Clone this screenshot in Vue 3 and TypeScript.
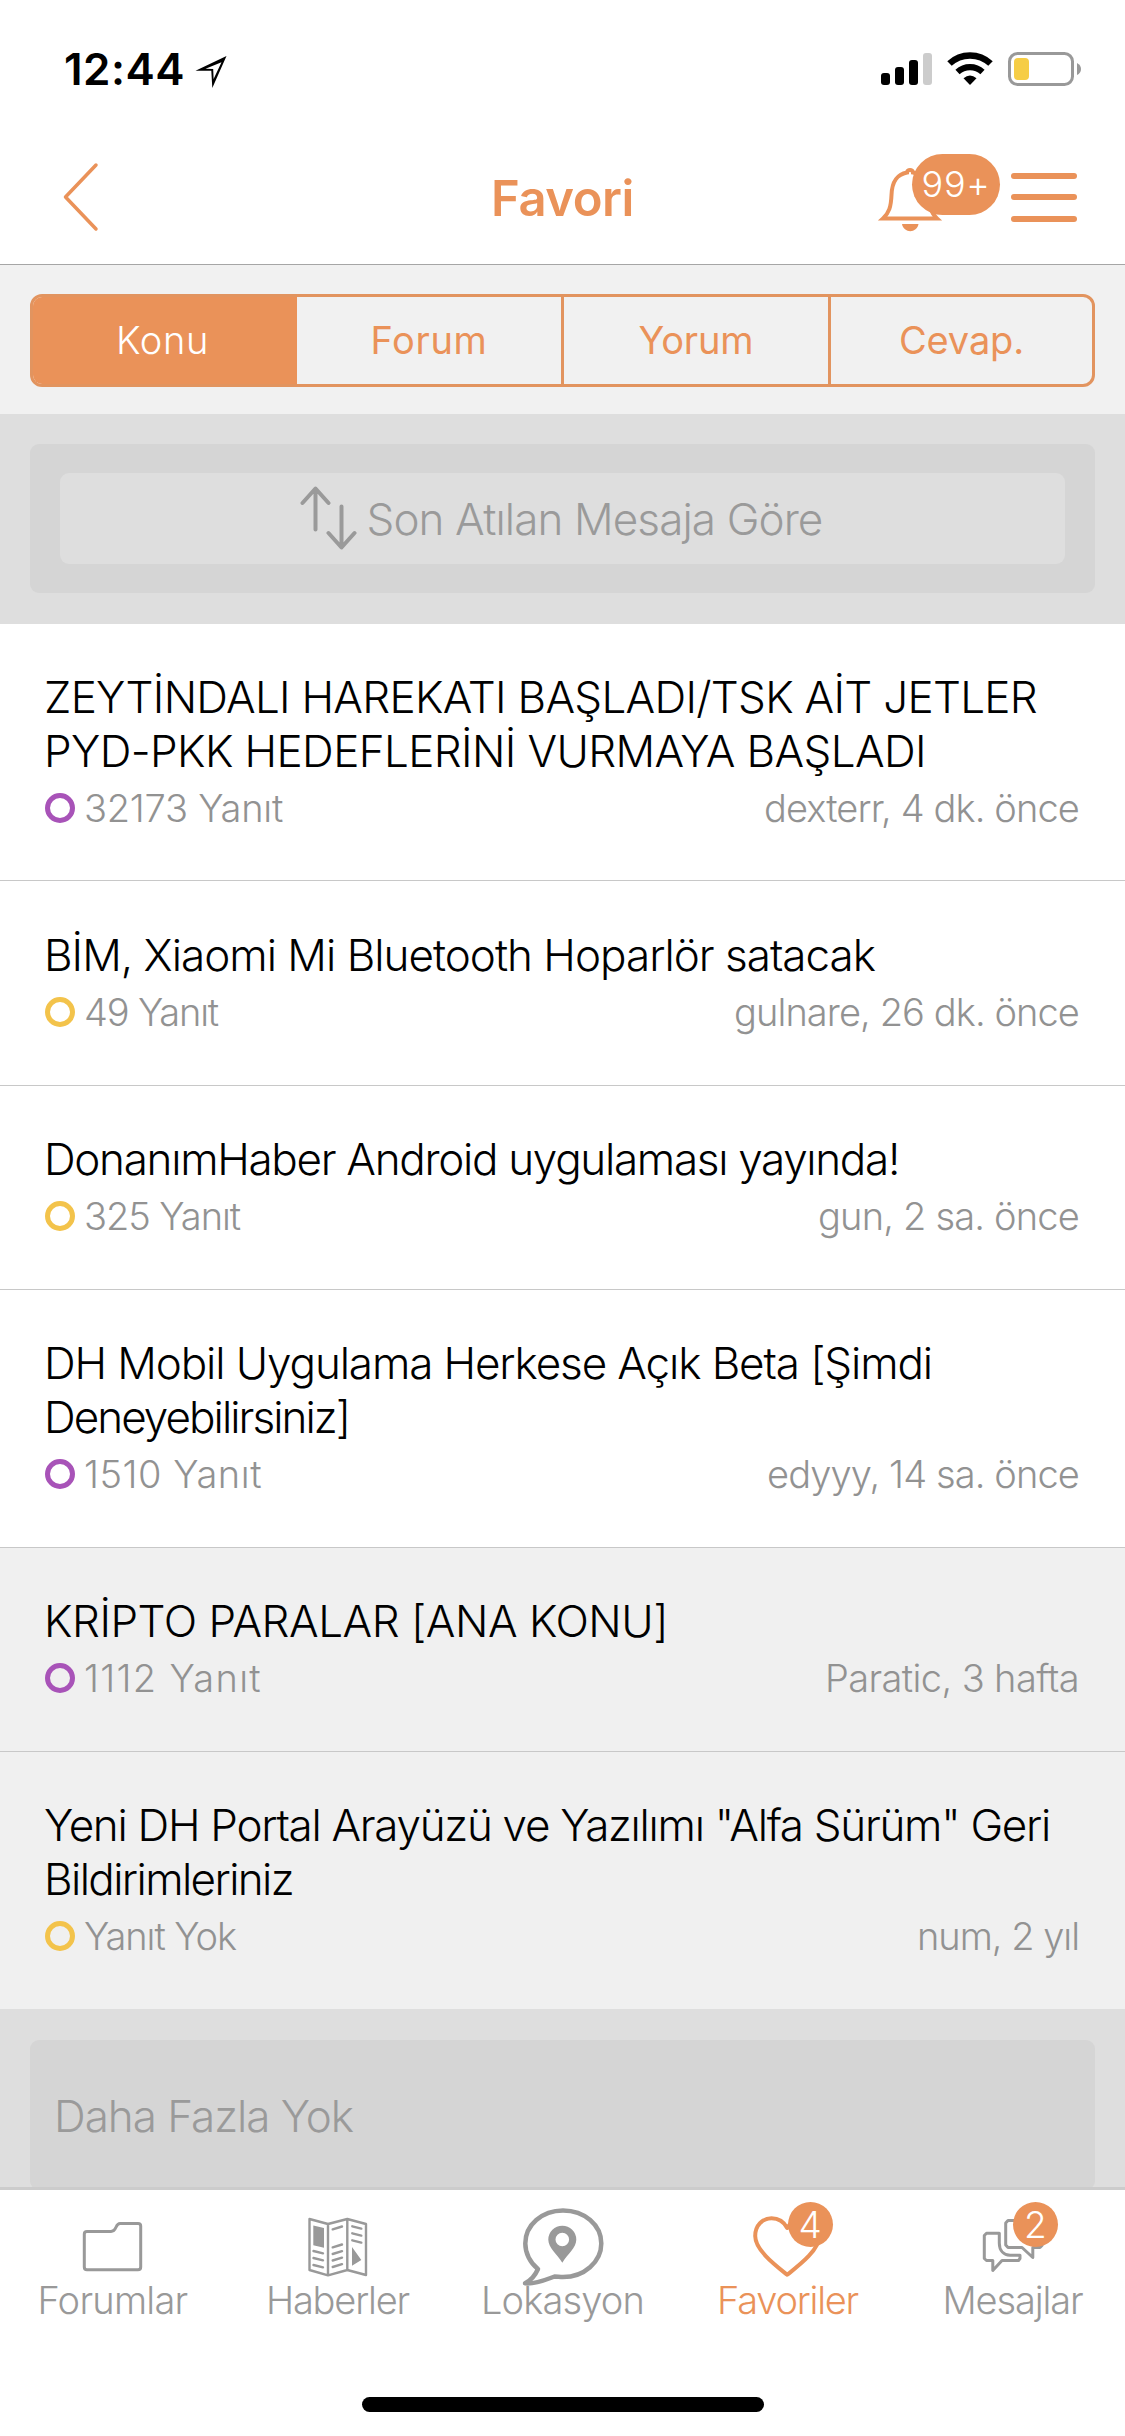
<script setup lang="ts">
import type { Directive } from 'vue'

interface Line {
  text: string
  width: number
}

interface Topic {
  lines: Line[]
  replies: Line
  last: Line
  hot: boolean
  read: boolean
}

interface Tab {
  id: string
  label: Line
  badge?: string
  active?: boolean
}

// Tracks a single line of text so that it spans the given advance width.
const vFit: Directive<HTMLElement, number> = {
  mounted(el, binding) {
    const count = (el.textContent ?? '').length
    const natural = el.getBoundingClientRect().width
    const spacing = (binding.value - natural) / count
    el.style.letterSpacing = `${spacing.toFixed(3)}px`
  },
}

const segments: Line[] = [
  { text: 'Konu', width: 93 },
  { text: 'Forum', width: 117 },
  { text: 'Yorum', width: 115 },
  { text: 'Cevap.', width: 125 },
]

const topics: Topic[] = [
  {
    lines: [
      { text: 'ZEYTİNDALI HAREKATI BAŞLADI/TSK AİT JETLER', width: 993 },
      { text: 'PYD-PKK HEDEFLERİNİ VURMAYA BAŞLADI', width: 882 },
    ],
    replies: { text: '32173 Yanıt', width: 199 },
    last: { text: 'dexterr, 4 dk. önce', width: 315 },
    hot: true,
    read: false,
  },
  {
    lines: [{ text: 'BİM, Xiaomi Mi Bluetooth Hoparlör satacak', width: 831 }],
    replies: { text: '49 Yanıt', width: 134 },
    last: { text: 'gulnare, 26 dk. önce', width: 345 },
    hot: false,
    read: false,
  },
  {
    lines: [{ text: 'DonanımHaber Android uygulaması yayında!', width: 855 }],
    replies: { text: '325 Yanıt', width: 156 },
    last: { text: 'gun, 2 sa. önce', width: 261 },
    hot: false,
    read: false,
  },
  {
    lines: [
      { text: 'DH Mobil Uygulama Herkese Açık Beta [Şimdi', width: 888 },
      { text: 'Deneyebilirsiniz]', width: 305 },
    ],
    replies: { text: '1510 Yanıt', width: 178 },
    last: { text: 'edyyy, 14 sa. önce', width: 312 },
    hot: true,
    read: false,
  },
  {
    lines: [{ text: 'KRİPTO PARALAR [ANA KONU]', width: 624 }],
    replies: { text: '1112 Yanıt', width: 178 },
    last: { text: 'Paratic, 3 hafta', width: 254 },
    hot: true,
    read: true,
  },
  {
    lines: [
      { text: 'Yeni DH Portal Arayüzü ve Yazılımı "Alfa Sürüm" Geri', width: 1006 },
      { text: 'Bildirimleriniz', width: 249 },
    ],
    replies: { text: 'Yanıt Yok', width: 152 },
    last: { text: 'num, 2 yıl', width: 162 },
    hot: false,
    read: true,
  },
]

const tabs: Tab[] = [
  { id: 'forums', label: { text: 'Forumlar', width: 150 } },
  { id: 'news', label: { text: 'Haberler', width: 143 } },
  { id: 'location', label: { text: 'Lokasyon', width: 163 } },
  { id: 'favorites', label: { text: 'Favoriler', width: 141 }, badge: '4', active: true },
  { id: 'messages', label: { text: 'Mesajlar', width: 140 }, badge: '2' },
]
</script>

<template>
  <div class="screen">
    <div class="status">
      <span v-fit="121" class="clock">12:44</span>
      <svg class="arrow" width="34" height="36" viewBox="0 0 34 36">
        <path d="M31.5 1 L0.5 15.8 H16.3 L17.3 33 Z M26.5 7.2 L18.6 24 L18.2 14 L10.5 13.8 Z" fill="#000" fill-rule="evenodd" />
      </svg>
      <svg class="signals" width="206" height="40" viewBox="0 0 206 40">
        <rect x="1" y="23" width="9" height="12" rx="3" />
        <rect x="15" y="17" width="9" height="18" rx="3" />
        <rect x="29" y="10" width="9" height="25" rx="3" />
        <rect x="43" y="3" width="9" height="32" rx="3" fill="#ccc" />
        <path d="M69.5 13.5 A30 30 0 0 1 110.500 13.500" fill="none" stroke="#000" stroke-width="6.500" />
        <path d="M77.500 22 A18.500 18.500 0 0 1 102.500 22" fill="none" stroke="#000" stroke-width="6.200" />
        <path d="M83.500 28.300 Q90 22.500 96.500 28.300 L90 35 Z" />
        <rect x="129.500" y="3.500" width="63" height="31" rx="8" fill="none" stroke="#999" stroke-width="3" />
        <rect x="134" y="8" width="15" height="22" rx="4" fill="#f6cd45" />
        <path d="M197 13 Q201 15 201 19 T197 25 Z" fill="#999" />
      </svg>
    </div>

    <header class="nav">
      <svg class="back" width="40" height="72" viewBox="0 0 40 72">
        <path d="M36 4 L5.500 36 L36 68" />
      </svg>
      <h1 v-fit="143" class="title">Favori</h1>
      <div class="actions">
        <div class="bell">
          <svg width="68" height="72" viewBox="0 0 68 72">
            <path d="M7 57.500 C13 52 15 46 15.500 34 C16 20 21 13.500 31 11.500 C31 8 37 8 37 11.500 C47 13.500 52 20 52.500 34 C53 46 55 52 61 57.500 Z" class="stroke" />
            <path d="M26 63 H42.500 C41 72.500 27.500 72.500 26 63 Z" class="fill" />
          </svg>
          <span class="count"><span v-fit="69">99+</span></span>
        </div>
        <div class="menu"><i /><i /><i /></div>
      </div>
    </header>

    <div class="segbar">
      <div class="segments">
        <div v-for="(s, i) in segments" :key="s.text" class="segment" :class="{ on: i === 0 }">
          <span v-fit="s.width">{{ s.text }}</span>
        </div>
      </div>
    </div>

    <div class="sortbar">
      <div class="sortbox">
        <div class="sort">
          <svg width="58" height="66" viewBox="0 0 58 66">
            <path d="M3.500 18 L16.500 3.500 L29.500 18 M16.500 4 V44.500 M42.500 21.500 V62 M29.500 48 L42.500 62.500 L55.500 48" />
          </svg>
          <span v-fit="456">Son Atılan Mesaja Göre</span>
        </div>
      </div>
    </div>

    <main>
      <article v-for="t in topics" :key="t.lines[0].text" class="topic" :class="{ read: t.read }">
        <div v-for="l in t.lines" :key="l.text" class="line"><span v-fit="l.width">{{ l.text }}</span></div>
        <div class="meta">
          <i class="dot" :class="{ hot: t.hot }" />
          <span v-fit="t.replies.width">{{ t.replies.text }}</span>
          <span v-fit="t.last.width" class="last">{{ t.last.text }}</span>
        </div>
      </article>
    </main>

    <div class="more">
      <div class="morebox"><span v-fit="299">Daha Fazla Yok</span></div>
    </div>

    <nav class="tabs">
      <div v-for="tab in tabs" :key="tab.id" class="tab" :class="{ active: tab.active }">
        <svg width="225" height="87" viewBox="0 0 225 87">
          <path
            v-if="tab.id === 'forums'"
            d="M84.300 77 V44 Q84.300 41.500 87 41.500 H111 C117 41.500 115 33.500 120 33.500 H138 Q140.700 33.500 140.700 36 V77 Q140.700 79.800 138 79.800 H87 Q84.300 79.800 84.300 77 Z"
            stroke-width="3"
          />
          <g v-else-if="tab.id === 'news'" stroke-width="2.400">
            <path d="M84.500 29 L103 34 L122.300 29 L141 34 V85 L122.300 80 L103 85.300 L84.500 80 Z M103 34 V85 M122.300 29 V80" />
            <path d="M88.300 35.500 L99 38 V57.800 L88.300 55.300 Z M127 57 L136.300 70 L127 75.700 Z" class="solid" />
            <path
              d="M88.500 61 L98 63.300 M88.500 68 L98 70.300 M88.500 75 L98 77.300 M107.700 39.300 L117 36.500 M107.700 57.300 L117 54.500 M107.700 64 L117 61.200 M107.700 70.500 L117 67.700 M107.700 77 L117 74.200 M127.300 36.300 L136.300 38.600 M127.300 43.300 L136.300 45.600 M127.300 50.300 L136.300 52.600"
            />
          </g>
          <g v-else-if="tab.id === 'location'">
            <path
              d="M88 79 C80 73 75.300 63 75.300 53.500 C75.300 35 92 20.500 113 20.500 C134.500 20.500 151.300 35 151.300 53.500 C151.300 72 134 87 113 87 C110 87 107 86.500 104.500 86.500 C96 89.500 86 94.500 75 93.300 C82 90 86 83.500 88 79 Z"
              stroke-width="4.500"
            />
            <path
              d="M112.300 72.700 C107 64 98.300 57.500 98.300 49.700 A14 14 0 0 1 126.300 49.700 C126.300 57.500 117.600 64 112.300 72.700 Z M105.500 49.500 A6.800 6.800 0 1 0 119.100 49.500 A6.800 6.800 0 1 0 105.500 49.500 Z"
              class="solid"
              fill-rule="evenodd"
            />
          </g>
          <path
            v-else-if="tab.id === 'favorites'"
            d="M112.200 84.800 C100 75 80.200 60 80.200 46 C80.200 35.500 87.500 28.300 96.500 28.300 C104 28.300 109 32 112.200 38 C115.500 32 120.500 28.300 128 28.300 C137 28.300 144.300 35.500 144.300 46 C144.300 60 124.500 75 112.200 84.800 Z"
            stroke-width="4"
          />
          <g v-else stroke-width="3">
            <path d="M86.500 43.300 H99.300 V53 C99.300 61 104 65 110 65.300 H120 V68.500 L118.500 70.500 H102 L92.800 80.500 V70.500 H86.500 L84.300 68.500 V45.500 Z" />
            <path d="M108 30.500 H142 V55.500 L140 57.500 H132.800 V67.500 L122 57.500 H108 L105.700 55 V33 Z" />
          </g>
        </svg>
        <span v-if="tab.badge" class="badge">{{ tab.badge }}</span>
        <span v-fit="tab.label.width" class="label">{{ tab.label.text }}</span>
      </div>
    </nav>
    <div class="home"><i /></div>
  </div>
</template>

<style>
body {
  margin: 0;
  background: #fff;
}
</style>

<style scoped>
.screen {
  width: 1125px;
  height: 2436px;
  overflow: hidden;
  display: flex;
  flex-direction: column;
  background: #fff;
  font-family: Inter, "Liberation Sans", sans-serif;
  font-weight: 300;
  white-space: nowrap;
}
.screen > * {
  flex-shrink: 0;
}
svg {
  display: block;
  overflow: visible;
}
.status {
  height: 132px;
  box-sizing: border-box;
  padding: 42px 39px 0 64px;
  display: flex;
  align-items: flex-start;
}
.clock {
  font-size: 44px;
  line-height: 54px;
  font-weight: 600;
}
.arrow {
  margin: 13px 0 0 10px;
}
.signals {
  margin: 8px 0 0 auto;
}
.nav {
  height: 132px;
  display: grid;
  grid-template-columns: 1fr auto 1fr;
  align-items: center;
  border-bottom: 1px solid #a6a6a6;
  color: #ea9259;
}
.back {
  margin: -2px 0 0 60px;
  fill: none;
  stroke: #ea9259;
  stroke-width: 3.5;
  stroke-linecap: round;
  stroke-linejoin: round;
}
.title {
  margin: 2px 0 0;
  font-size: 49px;
  line-height: 60px;
  font-weight: 600;
}
.actions {
  display: flex;
  justify-content: flex-end;
  align-items: center;
  padding-right: 48px;
}
.bell {
  position: relative;
  width: 135px;
  height: 72px;
  margin-top: -2px;
}
.stroke {
  fill: none;
  stroke: #ea9259;
  stroke-width: 4;
}
.fill {
  fill: #ea9259;
}
.count {
  position: absolute;
  left: 36px;
  top: -7px;
  width: 88px;
  height: 61px;
  border-radius: 31px;
  background: #ea9259;
  color: #fff;
  font-size: 36px;
  line-height: 61px;
  text-align: center;
}
.menu {
  display: flex;
  flex-direction: column;
  gap: 15.500px;
  margin-top: -2px;
}
.menu i {
  width: 66px;
  height: 6px;
  border-radius: 3px;
  background: #ea9259;
}
.segbar {
  height: 149px;
  box-sizing: border-box;
  padding: 29px 30px 0;
  background: #f1f1f1;
}
.segments {
  display: flex;
  height: 93px;
  box-sizing: border-box;
  border: 3px solid #e2945f;
  border-radius: 12px;
  overflow: hidden;
}
.segment {
  flex: 1;
  box-sizing: border-box;
  border-right: 3px solid #e2945f;
  color: #ea9259;
  font-size: 38px;
  line-height: 87px;
  font-weight: 400;
  text-align: center;
}
.segment:last-child {
  flex: 0 0 261px;
  border-right: 0;
}
.segment.on {
  flex: 0 0 264px;
  border-right: 0;
  padding-right: 5px;
  background: #ea9259;
  color: #fff;
  font-weight: 300;
}
.sortbar {
  height: 209.500px;
  box-sizing: border-box;
  padding: 30px;
  background: #dedede;
}
.sortbox {
  height: 149px;
  box-sizing: border-box;
  padding: 29px 30px;
  border-radius: 9px;
  background: #d5d5d5;
}
.sort {
  height: 91px;
  box-sizing: border-box;
  padding: 0 4px 0 0;
  display: flex;
  align-items: center;
  justify-content: center;
  gap: 10px;
  border-radius: 9px;
  background: #dedede;
  color: #9a9a9a;
  font-size: 44px;
}
.sort path {
  fill: none;
  stroke: #9a9a9a;
  stroke-width: 4;
  stroke-linecap: round;
  stroke-linejoin: round;
}
.sort svg {
  margin-top: -2px;
}
.sort span {
  padding-top: 1px;
}
.topic {
  padding: 47.500px 46px 48.750px 44px;
  border-bottom: 1px solid #c8c8c8;
  background: #fff;
  color: #000;
}
.topic.read {
  background: #f0f0f0;
}
.topic:last-child {
  border-bottom-color: #dedede;
}
.line {
  font-size: 44px;
  line-height: 53.500px;
}
.meta {
  display: flex;
  align-items: center;
  height: 48px;
  margin-top: 5.500px;
  color: #929292;
  font-size: 38px;
}
.dot {
  width: 20px;
  height: 20px;
  margin: 0 9px 0 1px;
  border: 5px solid #f3c34b;
  border-radius: 50%;
}
.dot.hot {
  border-color: #a853b8;
}
.last {
  margin-left: auto;
}
.more {
  height: 177.500px;
  box-sizing: border-box;
  padding: 30.500px 30px 0;
  background: #dedede;
}
.morebox {
  height: 150px;
  box-sizing: border-box;
  padding: 0 24px;
  border-radius: 9px;
  background: #d5d5d5;
  color: #9a9a9a;
  font-size: 44px;
  line-height: 153px;
}
.tabs {
  position: relative;
  display: flex;
  height: 207px;
  border-top: 3px solid #ccc;
  background: #fff;
}
.tab {
  position: relative;
  width: 225px;
  display: flex;
  flex-direction: column;
  align-items: center;
  color: #999;
}
.tab.active {
  color: #ea9259;
}
.tab svg {
  fill: none;
  stroke: currentColor;
  stroke-linejoin: round;
  stroke-linecap: round;
}
.tab .solid {
  fill: currentColor;
  stroke: none;
}
.label {
  font-size: 38px;
  line-height: 46px;
}
.badge {
  position: absolute;
  left: 112.500px;
  top: 11.500px;
  width: 45.500px;
  height: 45.500px;
  border-radius: 50%;
  background: #ea9259;
  color: #fff;
  font-size: 37px;
  line-height: 45px;
  text-align: center;
}
.home {
  display: flex;
  justify-content: center;
}
.home i {
  width: 402px;
  height: 15px;
  border-radius: 8px;
  background: #000;
}
</style>
